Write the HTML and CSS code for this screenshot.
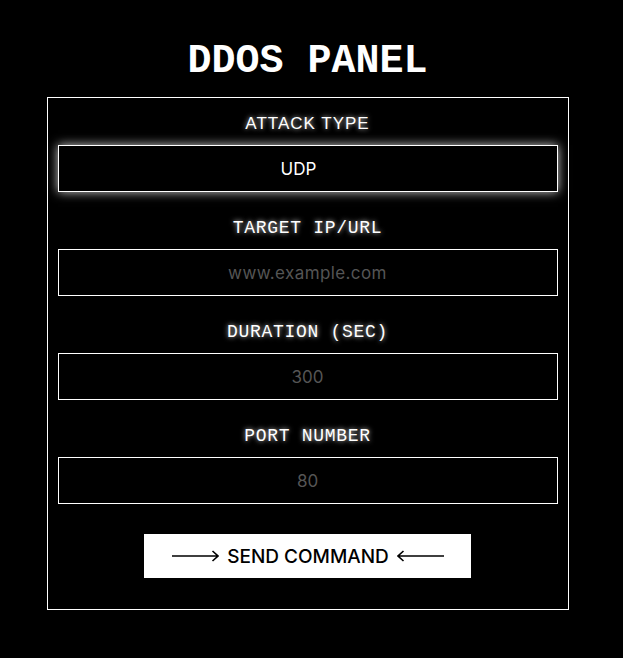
FILE: index.html
```html
<!DOCTYPE html>
<html lang="en">
<head>
<meta charset="utf-8">
<title>DDOS PANEL</title>
<link rel="stylesheet" href="styles.css">
</head>
<body>
<div class="page">
  <h1 class="title">DDOS PANEL</h1>
  <form class="panel">
    <div class="group">
      <label class="label label-sans">ATTACK TYPE</label>
      <input class="field field-active" type="text" value="UDP" readonly>
    </div>
    <div class="group">
      <label class="label">TARGET IP/URL</label>
      <input class="field field-url" type="text" placeholder="www.example.com">
    </div>
    <div class="group">
      <label class="label">DURATION (SEC)</label>
      <input class="field" type="text" placeholder="300">
    </div>
    <div class="group">
      <label class="label">PORT NUMBER</label>
      <input class="field" type="text" placeholder="80">
    </div>
    <div class="actions">
      <button class="send" type="button">
        <svg class="arrow" width="47" height="12" viewBox="0 0 47 12"><path d="M0 6H46M40.5 1L46 6L40.5 11" fill="none" stroke="#000" stroke-width="1.6"/></svg>
        <span>SEND COMMAND</span>
        <svg class="arrow" width="47" height="12" viewBox="0 0 47 12"><path d="M47 6H1M6.5 1L1 6L6.5 11" fill="none" stroke="#000" stroke-width="1.6"/></svg>
      </button>
    </div>
  </form>
</div>
</body>
</html>
```
FILE: styles.css
```css
html, body {
  margin: 0;
  padding: 0;
  background: #000;
}
.page {
  width: 615px;
  padding-top: 38px;
  display: flex;
  flex-direction: column;
  align-items: center;
}
.title {
  margin: 0 0 11px;
  font-family: "Liberation Mono", monospace;
  font-weight: 700;
  font-size: 40px;
  line-height: 48px;
  color: #fff;
}
.panel {
  box-sizing: border-box;
  width: 522px;
  border: 1px solid #fff;
  padding: 15px 10px 31px;
  display: flex;
  flex-direction: column;
}
.group {
  display: flex;
  flex-direction: column;
  align-items: center;
  margin-bottom: 25px;
}
.label {
  font-family: "Liberation Mono", monospace;
  font-size: 18px;
  letter-spacing: 0.7px;
  line-height: 22px;
  color: #fff;
  text-shadow: 0 0 5px rgba(255,255,255,0.8);
  margin-bottom: 10px;
}
.label-sans {
  font-family: "Liberation Sans", Arial, sans-serif;
  font-size: 17px;
  letter-spacing: 1px;
}
.field {
  box-sizing: border-box;
  width: 500px;
  height: 47px;
  margin: 0;
  padding: 0 10px;
  border: 1px solid #fff;
  border-radius: 0;
  background: #000;
  color: #fff;
  font-family: Inter, "Noto Sans", sans-serif;
  font-size: 17px;
  text-align: center;
  outline: none;
}
.field::placeholder {
  color: #555;
}
.field-active {
  padding-right: 28px;
  box-shadow: 0 0 10px rgba(255,255,255,0.8);
}
.field-url {
  letter-spacing: 0.4px;
}
.actions {
  display: flex;
  justify-content: center;
  margin-top: 5px;
}
.send {
  box-sizing: border-box;
  width: 327px;
  height: 44px;
  margin: 0;
  padding: 0 27px 0 28px;
  border: none;
  border-radius: 0;
  background: #fff;
  color: #000;
  display: flex;
  align-items: center;
  justify-content: space-between;
  font-family: Inter, "Noto Sans", sans-serif;
  font-size: 19px;
  font-weight: 500;
  cursor: pointer;
}
.arrow {
  display: block;
  flex: none;
}
```
